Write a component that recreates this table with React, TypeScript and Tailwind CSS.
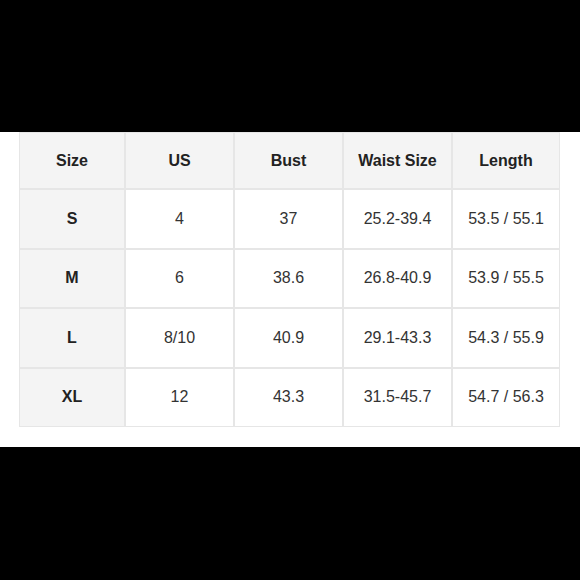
import React from "react";

const headers = ["Size", "US", "Bust", "Waist Size", "Length"];

const rows = [
  ["S", "4", "37", "25.2-39.4", "53.5 / 55.1"],
  ["M", "6", "38.6", "26.8-40.9", "53.9 / 55.5"],
  ["L", "8/10", "40.9", "29.1-43.3", "54.3 / 55.9"],
  ["XL", "12", "43.3", "31.5-45.7", "54.7 / 56.3"],
];

const App: React.FC = () => {
  return (
    <div className="flex flex-col w-[580px] h-[580px] bg-black font-['Liberation_Sans',Arial,sans-serif]">
      <div className="h-[132px] bg-black" />
      <div className="h-[315px] bg-white pl-[19px]">
        <div className="grid grid-cols-[104px_107px_107px_107px_106px] grid-rows-[55px_57.5px_57.5px_57.5px_57.5px] gap-[2px] p-px w-[541px] bg-[#e6e6e6]">
          {headers.map((h) => (
            <div
              key={h}
              className="flex items-center justify-center bg-[#f4f4f4] text-[16px] font-bold text-[#222]"
            >
              {h}
            </div>
          ))}
          {rows.map((row) =>
            row.map((cell, i) => (
              <div
                key={row[0] + i}
                className={
                  i === 0
                    ? "flex items-center justify-center bg-[#f4f4f4] text-[16px] font-bold text-[#222]"
                    : "flex items-center justify-center bg-white text-[16px] text-[#333]"
                }
              >
                {cell}
              </div>
            ))
          )}
        </div>
      </div>
      <div className="flex-1 bg-black" />
    </div>
  );
};

export default App;
